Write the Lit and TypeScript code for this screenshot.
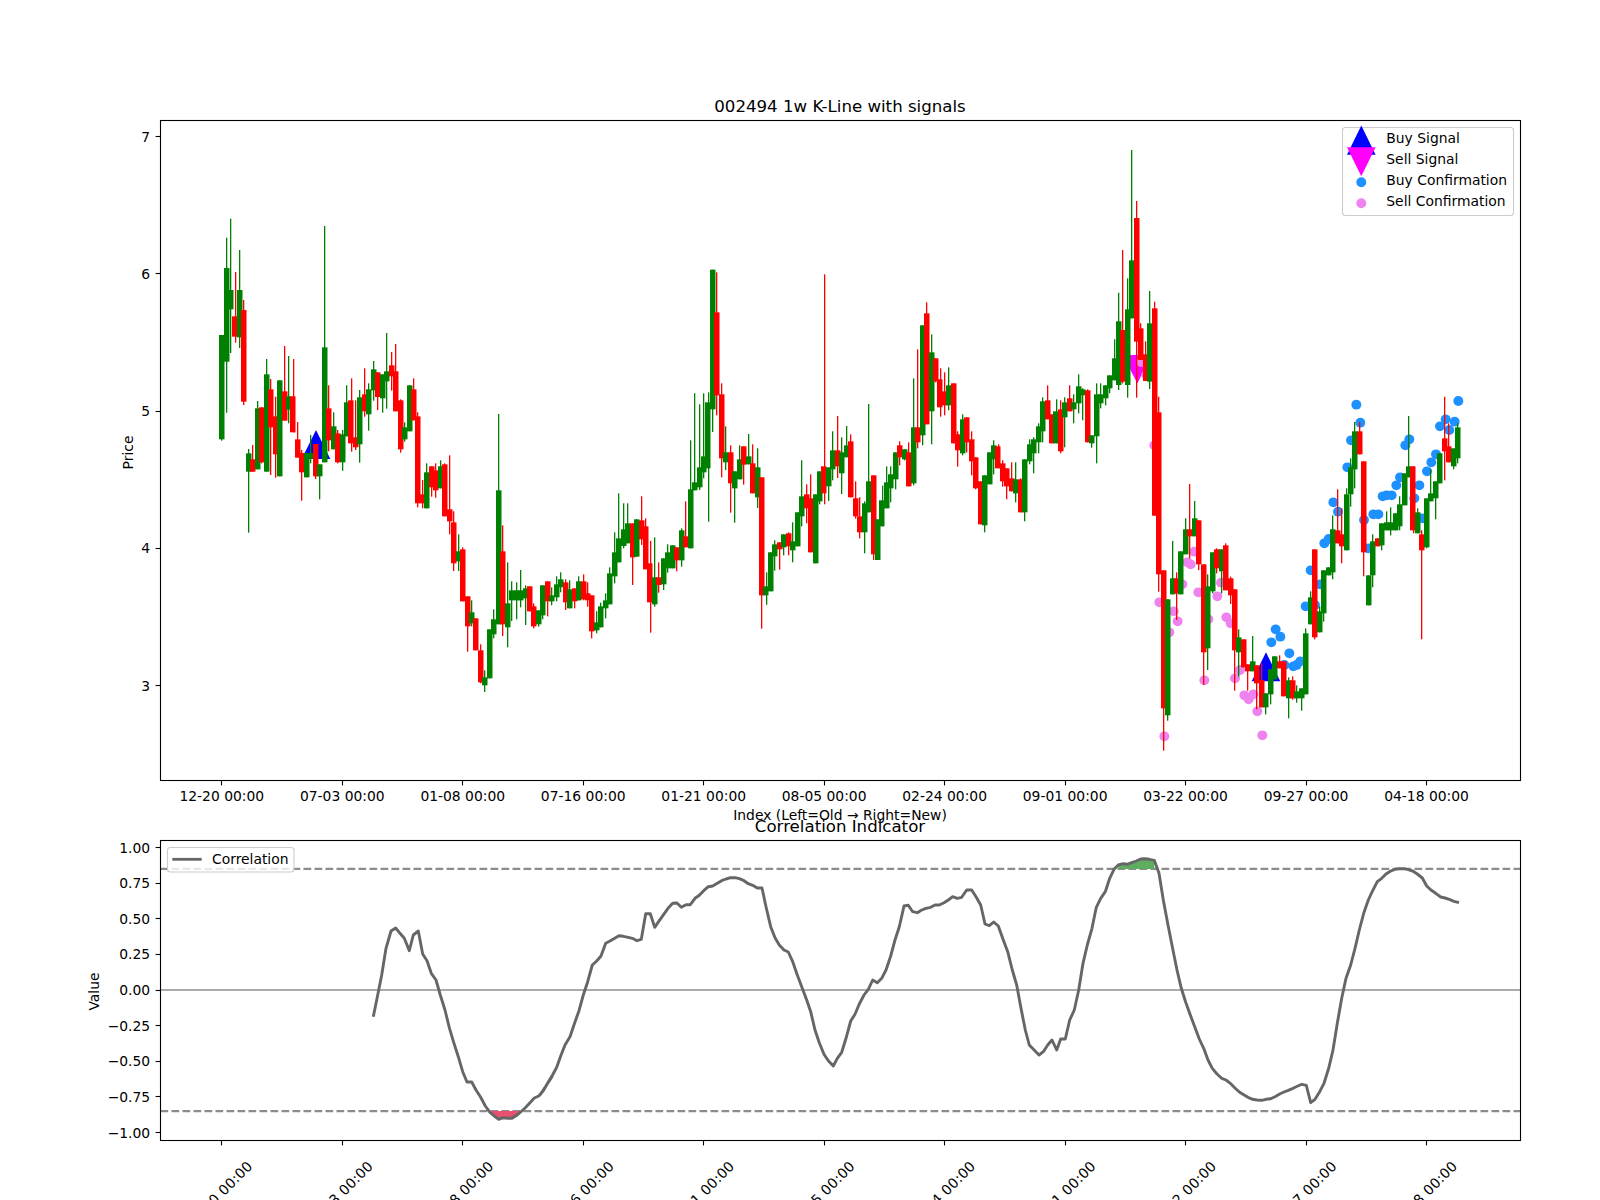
import { LitElement, html, svg, css } from "lit";
import { customElement } from "lit/decorators.js";

const X0 = 221.8;
const DX = 4.462;
const L = 160.5, R = 1520.5, T1 = 120.5, B1 = 780.5, T2 = 840.5, B2 = 1140.5;
const cx = (i: number) => X0 + DX * i;
const snap = (v: number) => Math.floor(v) + 0.5;
const priceY = (v: number) => 136.5 + (7 - v) * 137.25;
const corrY = (v: number) => 990 - v * 142.5;

// candle rows: colour, body top, body bottom, wick top, wick bottom; values are in 3x crop units
const SECTIONS: [number, string][] = [
  [300, `g105,418,105,422 g-96,185,-187,338 g-30,28,-244,159 r49,110,-84,128 g-30,112,-150,144 r30,305,0,315
g460,515,447,698 r478,515,435,515 g325,508,303,508 r322,487,322,490 g223,515,177,515 r268,382,237,525 r349,463,290,533
g241,529,241,529 r274,362,138,362 g289,329,168,370 r289,397,177,397 r418,473,366,473 r459,517,450,602 g459,532,459,532
g459,476,405,490 r432,529,432,537 g493,529,493,598 g142,487,-222,487 r325,421,256,454 g379,448,337,448 r400,487,390,490
g403,487,390,512 g307,409,256,409 r301,430,235,455 r412,442,301,450 g292,433,270,488 r283,334,205,350 g268,343,250,392
g208,271,183,302 r217,291,217,330 g223,295,223,338 g214,244,99,326 r196,229,156,272 r214,334,132,334 r301,448,298,458
g382,418,367,425 g256,394,256,394 r268,361,235,361 r349,610,337,622 r583,610,540,625 g517,625,490,625 r499,562,499,590
r511,571,490,593 g499,565,481,565 r493,649,490,649 r628,664,466,703`],
  [420, `r307,430,274,453 g394,424,343,453 r388,544,382,544 r529,619,529,695 g577,610,541,619 r595,691,595,691 r691,787,673,790
g772,796,751,816 g628,775,628,775 g598,643,568,655 g211,613,-18,613 r394,613,316,648 g550,622,427,682 g511,541,484,603
g511,541,487,598 g511,541,450,562 g505,535,496,615 r499,574,499,574 r559,619,550,625 g571,613,571,620 g496,586,496,598
r484,544,484,589 g526,544,502,556 g493,532,469,544 g478,502,457,517 r487,547,478,570 g508,565,481,565 r505,544,505,565
g484,541,469,541 r484,538,463,541 r520,541,487,560 r526,634,526,655 g607,631,574,640 g559,622,548,622 g541,565,520,595
g460,553,442,553 g397,469,337,490 g355,427,220,427`],
  [270, `g778,828,700,835 g760,820,700,820 r760,862,760,945 g748,860,748,860 r751,808,679,825 r769,898,745,898 r880,997,813,1088
g922,1003,802,1010 r922,945,877,968 g865,943,865,960 g847,895,823,908 g826,895,826,895 r832,871,832,904 g781,871,775,890
r799,832,694,832 g658,835,511,835 g637,661,370,661 g592,652,403,660 g559,607,370,625 g397,595,367,755 g-1,418,-1,486
r127,376,7,436 r373,565,340,622 g547,577,469,600 r547,640,526,728 g604,655,604,758 g568,628,526,628 r529,584,529,644
g559,583,492,583 r580,670,523,670 g592,682,535,714 r622,976,622,1076 g949,976,907,1004 g847,964,847,964 g823,859,811,902
r817,838,817,899 g793,832,793,856 r790,829,787,856 g814,841,757,877 g727,829,727,829 g679,739,571,769 r673,715,643,760
r685,847,613,847 g673,880,673,880 g604,694,604,703 r589,670,13,703 g592,649,592,693 g541,598,484,631`],
  [280, `r511,559,408,594 g517,580,472,642 g496,532,438,532 r484,652,463,652 r655,709,604,716 r709,757,652,775 g670,757,664,820
g604,697,372,697 r586,823,586,840 g718,840,718,840 g661,739,617,739 g607,685,559,685 g583,625,559,667 g517,598,517,628
r496,532,484,556 g508,538,508,541 r517,619,487,619 g442,610,295,616 r442,487,208,505 g136,466,136,496 r100,433,67,433
g217,394,163,493 r235,304,235,307 r298,382,265,410 r334,376,277,406 g316,376,262,391 r310,490,310,490 r463,511,454,560
g418,520,403,526 r412,487,412,517 r478,544,454,586 r532,625,532,628 r604,733,604,733 g586,736,586,757 g517,613,517,613
g496,538,481,583 r499,565,493,565 r550,604,541,620 r565,619,565,658 r595,634,547,634 g598,640,547,667 r598,697,595,697
g538,697,538,724 g493,544,478,553 g478,520,472,580 g439,487,430,520 g364,454,352,487 r361,418,316,418 r403,490,403,490
g394,490,358,490 r388,514,361,520 g367,412,352,502 r355,394,316,394 g367,388,343,430 g319,370,283,400 g328,346,325,421
r331,487,328,487 g466,490,466,503 g343,469,310,550 g343,370,310,385 g316,355,316,376 g286,325,286,340 g235,301,178,301`],
  [100, `g664,855,578,870 r690,845,450,850 g628,855,535,893 g481,655,150,655 r354,725,303,893 r685,780,670,780 r763,843,724,843 g670,845,573,867`],
  [400, `r-275,347,-295,347 r37,523,-10,575 r511,925,511,1052 g598,946,598,962 g535,583,423,583 r535,580,517,660 g454,583,454,583
g388,463,355,463 r388,409,252,475 g355,409,303,409 r361,493,361,510 r493,757,493,855 g559,745,523,810 g457,574,457,580
r448,505,445,520 g448,514,448,580 r436,571,430,571 r535,586,530,612 r568,751,568,872 g712,757,688,830 r718,802,718,802
r793,814,793,872 g784,814,708,814 r796,850,796,928 r840,922,790,922 g880,922,880,943 g808,883,808,913 g769,838,769,838
r784,805,766,805 r784,889,784,889 g841,895,832,955 r841,895,829,899 g874,895,856,908 g865,895,865,932 g700,883,685,883
g592,673,574,673 r448,712,448,718 g634,697,619,697 g511,640,511,665 g502,526,502,526 g388,517,346,538 r391,430,268,430
r403,439,325,490 g283,451,265,451 g202,283,175,320 g94,208,66,265 r94,163,66,163 r184,457,184,529 g526,616,526,616
g424,526,403,562 r415,439,415,439 g370,436,370,451 g367,391,334,391 g367,391,322,406 g340,391,340,391 g313,379,289,391
g220,316,220,316 g199,232,48,232 r199,391,199,400 g337,400,325,400 r403,451,391,718 g295,442,295,445 g280,304,208,304
g244,295,244,358 g160,250,160,250 r115,154,-10,241 r139,187,70,187 g145,199,145,208 g82,175,70,190`],
];

interface Candle { up: boolean; x: number; bt: number; bb: number; wt: number; wb: number }
const CANDLES: Candle[] = [];
for (const [off, text] of SECTIONS) {
  for (const tok of text.trim().split(/\s+/)) {
    const [a, b, c, d] = tok.slice(1).split(",").map(Number);
    CANDLES.push({
      up: tok[0] === "r",
      x: cx(CANDLES.length),
      bt: off + a / 3,
      bb: off + b / 3,
      wt: off + c / 3,
      wb: off + d / 3,
    });
  }
}

const z3 = (p: number[]) => [1100 + p[0] / 3, 400 + p[1] / 3];
const BLUE = [
  [769,14],[781,68],[753,121],[742,202],[700,307],[714,335],[673,430],[686,417],[632,511],[660,553],[617,619],[645,615],
  [527,688],[541,710],[514,727],[568,760],[553,795],[580,799],[590,795],[601,784],[1075,3],[1037,58],[1020,79],[1064,65],
  [1048,90],[916,136],[928,118],[1008,163],[994,187],[981,214],[900,232],[889,256],[958,256],[943,295],[848,289],[860,286],
  [875,286],[820,343],[835,343],[805,445],[792,360],[968,355],
].map(z3);
const PINK = [
  [124,-114],[139,-75],[163,136],[178,607],[193,1009],[221,634],[247,553],[233,664],[208,697],[262,487],[272,493],[283,455],
  [295,577],[352,589],[363,548],[325,658],[313,841],[379,652],[392,670],[405,835],[420,810],[433,886],[446,898],[460,883],
  [472,934],[487,1006],
].map(z3);

const zoomPts = (ox: number, pts: number[][]) => pts.map(([a, b]) => [ox + a / 3, 800 + b / 3]);
const CURVE = [
  ...zoomPts(60, [[940,650],[950,600],[965,525],[978,445],[993,393],[1007,384],[1020,400],[1033,415],[1048,452],[1060,405],[1075,393],[1088,462],[1101,482],[1114,520],[1128,540],[1141,585],[1155,630],[1168,683],[1182,730],[1195,770],[1208,815],[1221,846],[1235,846],[1248,870],[1262,892],[1276,918],[1290,937],[1303,948],[1316,958],[1330,953],[1343,955],[1356,955],[1370,946],[1383,935],[1396,923],[1410,908],[1423,894],[1436,888],[1450,872],[1463,850],[1476,830]]),
  ...zoomPts(540, [[0,885],[12,868],[25,846],[38,824],[50,802],[62,768],[75,735],[90,710],[103,672],[117,632],[130,585],[143,545],[157,495],[170,483],[183,468],[197,430],[210,423],[237,407],[250,409],[265,412],[277,415],[291,422],[304,418],[317,341],[331,341],[344,382],[358,362],[384,325],[398,310],[411,309],[424,322],[438,314],[451,314],[465,295],[478,286],[491,272],[505,260],[518,258],[532,250],[545,242],[558,237],[572,233],[585,233],[598,236],[612,242],[625,251],[638,256],[652,264],[666,264],[678,320],[692,380],[705,413],[718,435],[732,450],[745,456],[758,485],[772,525],[785,560],[800,600],[812,635],[825,690],[838,728],[852,763],[865,782],[880,798],[892,775],[905,757],[918,715],[932,663],[945,643],[958,612],[972,585],[985,568],[998,540],[1012,548],[1025,535],[1038,510],[1052,468],[1065,420],[1078,380],[1092,318],[1105,316],[1118,335],[1132,338],[1145,330],[1158,325],[1172,322],[1185,315],[1198,315],[1212,308],[1225,300],[1238,290],[1252,295],[1265,292],[1280,270],[1295,270],[1308,290],[1322,315],[1335,372],[1348,377],[1361,366],[1375,378],[1390,420],[1403,455],[1417,510],[1430,555],[1443,625],[1456,690],[1468,735]]),
  ...zoomPts(1030, [[27,765],[40,755],[53,735],[66,720],[80,750],[92,717],[106,717],[119,660],[133,630],[146,570],[159,490],[172,435],[186,385],[199,322],[212,295],[226,275],[239,235],[252,208],[265,195],[279,191],[292,193],[305,188],[319,183],[332,177],[345,176],[358,178],[373,181],[387,220],[400,300],[414,375],[427,440],[441,510],[454,565],[467,607],[481,645],[494,680],[508,717],[521,745],[534,780],[547,805],[561,822],[575,835],[588,840],[601,850],[614,863],[628,876],[641,884],[654,892],[668,898],[681,900],[695,901],[708,898],[722,896],[735,890],[749,882],[762,876],[775,871],[789,865],[802,859],[815,853],[829,856],[842,908],[855,898],[869,875],[882,850],[896,805],[909,750],[922,670],[935,595],[948,535],[962,495],[975,445],[988,390],[1001,340],[1015,300],[1028,272],[1042,245],[1055,235],[1068,222],[1082,213],[1095,208],[1108,206],[1122,206],[1135,209],[1148,213],[1162,222],[1177,234],[1190,258],[1203,270],[1217,280],[1232,291],[1245,294],[1258,298],[1272,304],[1287,308]]),
];
const toPts = (p: number[][]) => p.map(([a, b]) => `${a.toFixed(1)},${b.toFixed(1)}`).join(" ");
const HI = corrY(0.85), LO = corrY(-0.85);
const hiPts = CURVE.filter((p) => p[1] < HI - 0.5);
const loPts = CURVE.filter((p) => p[1] > LO + 0.5);
const hiFill = [[hiPts[0][0], HI], ...hiPts, [hiPts[hiPts.length - 1][0], HI]];
const loFill = [[loPts[0][0] - 2, LO], ...loPts, [loPts[loPts.length - 1][0] + 2, LO]];

const DATES = ["12-20", "07-03", "01-08", "07-16", "01-21", "08-05", "02-24", "09-01", "03-22", "09-27", "04-18"];
const TICKS = DATES.map((d, k) => ({ x: cx(27 * k), label: `${d} 00:00` }));
const PRICE_TICKS = [3, 4, 5, 6, 7];
const CORR_TICKS = [1, 0.75, 0.5, 0.25, 0, -0.25, -0.5, -0.75, -1];
const corrLabel = (v: number) => (v < 0 ? "\u2212" : "") + Math.abs(v).toFixed(2);
const up = (x: number, top: number, hw: number, h: number) => `${x},${top} ${x + hw},${top + h} ${x - hw},${top + h}`;
const down = (x: number, top: number, hw: number, h: number) => `${x - hw},${top} ${x + hw},${top} ${x},${top + h}`;

@customElement("app-root")
export class AppRoot extends LitElement {
  static styles = css`
    :host { display: block; width: 1600px; height: 1200px; background: #fff; overflow: hidden; }
    .chart { display: block; width: 1600px; height: 1200px; }
    text { font-family: "DejaVu Sans", sans-serif; font-size: 13.89px; fill: #000; }
    .title { font-size: 16.62px; text-anchor: middle; }
    .mid { text-anchor: middle; }
    .end { text-anchor: end; }
    .slant { text-anchor: end; letter-spacing: 0.25px; }
    .spine { fill: none; stroke: #000; stroke-width: 1.1; }
    .tick { stroke: #000; stroke-width: 1.1; }
    .up { fill: #ff0000; }
    .dn { fill: #008000; }
    .buy { fill: #0000ff; }
    .sell { fill: #ff00ff; }
    .bdot { fill: #1e90ff; }
    .pdot { fill: #ee82ee; }
    .legend { fill: #fff; fill-opacity: 0.8; stroke: #ccc; stroke-width: 1.1; }
    .zero { stroke: #ababab; stroke-width: 2.1; }
    .thresh { stroke: #8c8c8c; stroke-width: 2.1; stroke-dasharray: 7.7 3.3; }
    .curve { fill: none; stroke: #666; stroke-width: 2.9; stroke-linejoin: round; }
    .hi { fill: #5fae5f; }
    .lo { fill: #e8506f; }
    .lline { stroke: #666; stroke-width: 2.8; }
  `;

  private candle(c: Candle) {
    const cls = c.up ? "up" : "dn";
    return svg`<rect class=${cls} x=${Math.round(c.x - 0.65)} y=${c.wt} width="1.3" height=${c.wb - c.wt}></rect>
      <rect class=${cls} x=${Math.round(c.x - 2.7)} y=${c.bt} width="5.5" height=${c.bb - c.bt}></rect>`;
  }

  private upperPanel() {
    return svg`
      <polygon class="buy" points=${up(316, 430, 14.3, 29)}></polygon>
      <polygon class="buy" points=${up(1266, 652.3, 14.3, 29)}></polygon>
      <polygon class="sell" points=${down(1137.3, 355, 14.3, 28.5)}></polygon>
      ${BLUE.map((p) => svg`<circle class="bdot" cx=${p[0]} cy=${p[1]} r="4.95"></circle>`)}
      ${PINK.map((p) => svg`<circle class="pdot" cx=${p[0]} cy=${p[1]} r="4.95"></circle>`)}
      ${CANDLES.map((c) => this.candle(c))}
      <rect class="spine" x=${L} y=${T1} width=${R - L} height=${B1 - T1}></rect>
      ${TICKS.map((t) => svg`<line class="tick" x1=${snap(t.x)} x2=${snap(t.x)} y1=${B1} y2=${B1 + 4.9}></line>
        <text class="mid" x=${t.x} y="801">${t.label}</text>`)}
      ${PRICE_TICKS.map((v) => svg`<line class="tick" x1=${L - 4.9} x2=${L} y1=${snap(priceY(v))} y2=${snap(priceY(v))}></line>
        <text class="end" x="150.2" y=${priceY(v) + 5}>${v}</text>`)}
      <text class="title" x="840" y="111.7">002494 1w K-Line with signals</text>
      <text class="mid" x="840" y="820">Index (Left=Old → Right=New)</text>
      <text class="mid" transform="translate(132.8 452.5) rotate(-90)">Price</text>
      <rect class="legend" x="1342.5" y="127.5" width="171" height="88" rx="3"></rect>
      <polygon class="buy" points=${up(1361.3, 125.4, 14.3, 29.3)}></polygon>
      <polygon class="sell" points=${down(1361.3, 147.3, 14.3, 29)}></polygon>
      <circle class="bdot" cx="1361.3" cy="182.3" r="4.95"></circle>
      <circle class="pdot" cx="1361.3" cy="203.3" r="4.95"></circle>
      <text x="1386.3" y="142.8">Buy Signal</text>
      <text x="1386.3" y="163.8">Sell Signal</text>
      <text x="1386.3" y="184.8">Buy Confirmation</text>
      <text x="1386.3" y="205.8">Sell Confirmation</text>
    `;
  }

  private lowerPanel() {
    return svg`
      <line class="zero" x1=${L} x2=${R} y1=${corrY(0)} y2=${corrY(0)}></line>
      <line class="thresh" x1=${L} x2=${R} y1=${HI} y2=${HI}></line>
      <line class="thresh" x1=${L} x2=${R} y1=${LO} y2=${LO}></line>
      <polygon class="hi" points=${toPts(hiFill)}></polygon>
      <polygon class="lo" points=${toPts(loFill)}></polygon>
      <polyline class="curve" points=${toPts(CURVE)}></polyline>
      <rect class="spine" x=${L} y=${T2} width=${R - L} height=${B2 - T2}></rect>
      ${TICKS.map((t) => svg`<line class="tick" x1=${snap(t.x)} x2=${snap(t.x)} y1=${B2} y2=${B2 + 4.9}></line>
        <text class="slant" transform="translate(${t.x + 31.6} 1167) rotate(-45)">${t.label}</text>`)}
      ${CORR_TICKS.map((v) => svg`<line class="tick" x1=${L - 4.9} x2=${L} y1=${snap(corrY(v))} y2=${snap(corrY(v))}></line>
        <text class="end" x="150.2" y=${corrY(v) + 5}>${corrLabel(v)}</text>`)}
      <text class="title" x="840" y="831.7">Correlation Indicator</text>
      <text class="mid" transform="translate(98.5 991.5) rotate(-90)">Value</text>
      <rect class="legend" x="167.5" y="847.5" width="126.5" height="24.5" rx="3"></rect>
      <line class="lline" x1="172.3" x2="201.7" y1="859.3" y2="859.3"></line>
      <text x="212" y="864.2">Correlation</text>
    `;
  }

  render() {
    return html`<svg class="chart" viewBox="0 0 1600 1200" xmlns="http://www.w3.org/2000/svg">
      ${this.upperPanel()}
      ${this.lowerPanel()}
    </svg>`;
  }
}
